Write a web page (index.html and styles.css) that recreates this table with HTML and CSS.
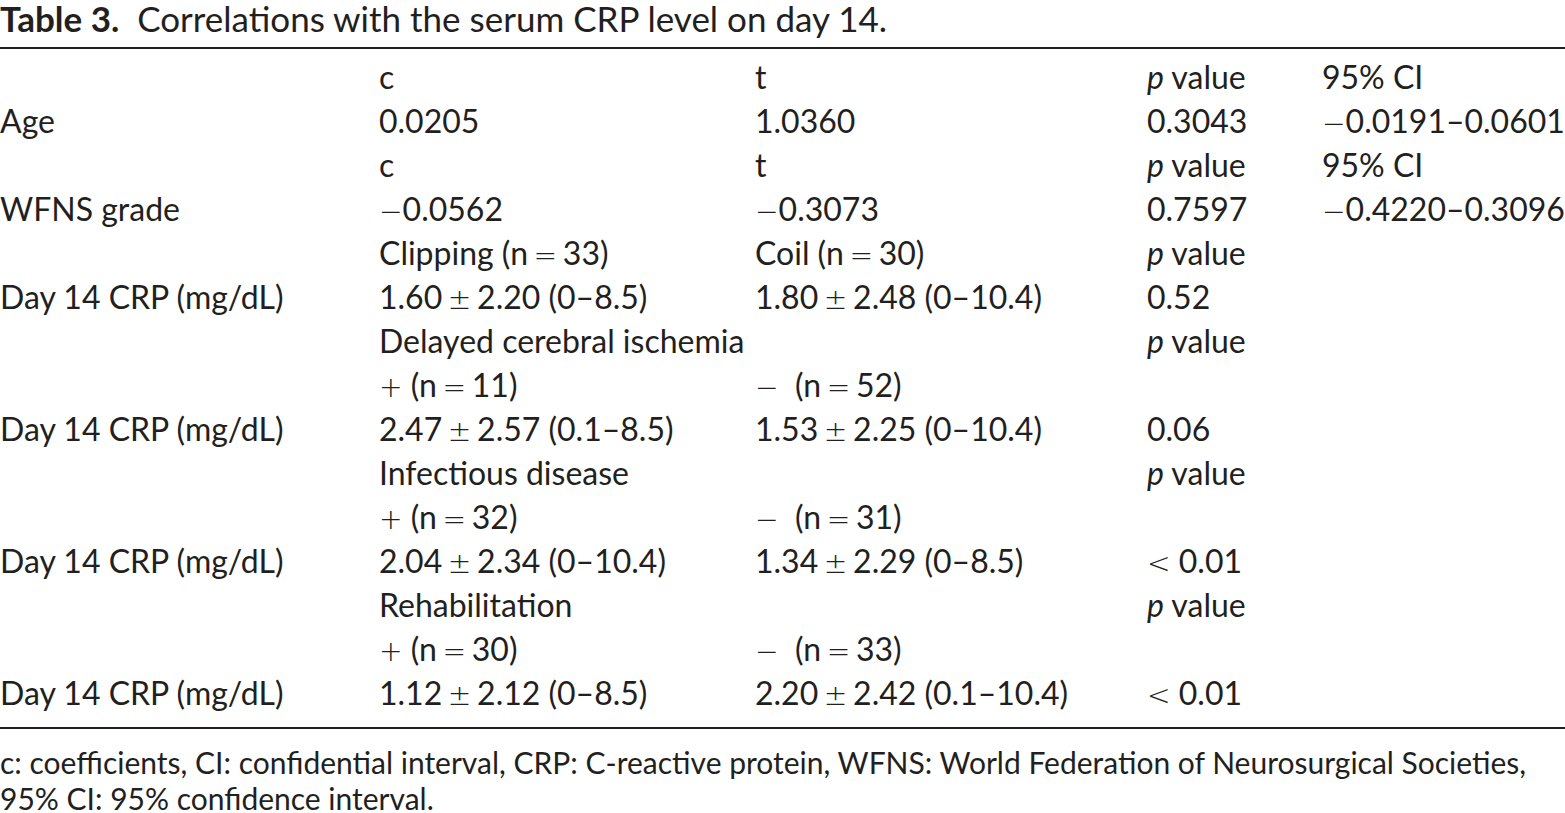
FILE: index.html
```html
<!DOCTYPE html>
<html lang="en">
<head>
<meta charset="utf-8">
<title>Table 3</title>
<link rel="stylesheet" href="styles.css">
</head>
<body>
<div class="page">
  <p class="caption"><b>Table 3.</b>&nbsp; Correlations with the serum CRP level on day 14.</p>
  <table class="data">
    <colgroup>
      <col class="c1"><col class="c2"><col class="c3"><col class="c4"><col class="c5">
    </colgroup>
    <tbody>
      <tr><td></td><td>c</td><td>t</td><td><i>p</i> value</td><td>95% CI</td></tr>
      <tr><td>Age</td><td>0.0205</td><td>1.0360</td><td>0.3043</td><td><span class="m">&minus;</span>0.0191&ndash;0.0601</td></tr>
      <tr><td></td><td>c</td><td>t</td><td><i>p</i> value</td><td>95% CI</td></tr>
      <tr><td>WFNS grade</td><td><span class="m">&minus;</span>0.0562</td><td><span class="m">&minus;</span>0.3073</td><td>0.7597</td><td><span class="m">&minus;</span>0.4220&ndash;0.3096</td></tr>
      <tr><td></td><td>Clipping (n<span class="m">&thinsp;=&thinsp;</span>33)</td><td>Coil (n<span class="m">&thinsp;=&thinsp;</span>30)</td><td><i>p</i> value</td><td></td></tr>
      <tr><td>Day 14 CRP (mg/dL)</td><td>1.60<span class="m">&thinsp;&plusmn;&thinsp;</span>2.20 (0&ndash;8.5)</td><td>1.80<span class="m">&thinsp;&plusmn;&thinsp;</span>2.48 (0&ndash;10.4)</td><td>0.52</td><td></td></tr>
      <tr><td></td><td colspan="2">Delayed cerebral ischemia</td><td><i>p</i> value</td><td></td></tr>
      <tr><td></td><td><span class="m">+</span> (n<span class="m">&thinsp;=&thinsp;</span>11)</td><td><span class="m">&minus;</span>&nbsp; (n<span class="m">&thinsp;=&thinsp;</span>52)</td><td></td><td></td></tr>
      <tr><td>Day 14 CRP (mg/dL)</td><td>2.47<span class="m">&thinsp;&plusmn;&thinsp;</span>2.57 (0.1&ndash;8.5)</td><td>1.53<span class="m">&thinsp;&plusmn;&thinsp;</span>2.25 (0&ndash;10.4)</td><td>0.06</td><td></td></tr>
      <tr><td></td><td>Infectious disease</td><td></td><td><i>p</i> value</td><td></td></tr>
      <tr><td></td><td><span class="m">+</span> (n<span class="m">&thinsp;=&thinsp;</span>32)</td><td><span class="m">&minus;</span>&nbsp; (n<span class="m">&thinsp;=&thinsp;</span>31)</td><td></td><td></td></tr>
      <tr><td>Day 14 CRP (mg/dL)</td><td>2.04<span class="m">&thinsp;&plusmn;&thinsp;</span>2.34 (0&ndash;10.4)</td><td>1.34<span class="m">&thinsp;&plusmn;&thinsp;</span>2.29 (0&ndash;8.5)</td><td><span class="m">&lt;</span> 0.01</td><td></td></tr>
      <tr><td></td><td>Rehabilitation</td><td></td><td><i>p</i> value</td><td></td></tr>
      <tr><td></td><td><span class="m">+</span> (n<span class="m">&thinsp;=&thinsp;</span>30)</td><td><span class="m">&minus;</span>&nbsp; (n<span class="m">&thinsp;=&thinsp;</span>33)</td><td></td><td></td></tr>
      <tr><td>Day 14 CRP (mg/dL)</td><td>1.12<span class="m">&thinsp;&plusmn;&thinsp;</span>2.12 (0&ndash;8.5)</td><td>2.20<span class="m">&thinsp;&plusmn;&thinsp;</span>2.42 (0.1&ndash;10.4)</td><td><span class="m">&lt;</span> 0.01</td><td></td></tr>
    </tbody>
  </table>
  <p class="note">c: coefficients, CI: confidential interval, CRP: C-reactive protein, WFNS: World Federation of Neurosurgical Societies,<br>95% CI: 95% confidence interval.</p>
</div>
</body>
</html>
```
FILE: styles.css
```css
html, body {
  margin: 0;
  padding: 0;
  background: #ffffff;
}
body {
  font-family: "Lato", "Open Sans", sans-serif;
  color: #231f20;
}
.page {
  width: 1565px;
}
.caption {
  margin: 0;
  font-size: 35px;
  line-height: 36px;
  height: 47px;
  white-space: nowrap;
}
.caption b {
  font-weight: 700;
}
.data {
  width: 1565px;
  border-collapse: collapse;
  table-layout: fixed;
  border-top: 2px solid #231f20;
  border-bottom: 2px solid #231f20;
  font-size: 32px;
}
.data tbody tr:first-child td {
  padding-top: 6px;
}
.data tbody tr:last-child td {
  padding-bottom: 12px;
}
.data td {
  padding: 0;
  height: 44px;
  line-height: 44px;
  vertical-align: middle;
  white-space: nowrap;
  overflow: visible;
}
.m {
  font-family: "DejaVu Sans", sans-serif;
  font-weight: 200;
  font-size: 0.88em;
  line-height: 1;
}
.c1 { width: 379px; }
.c2 { width: 376px; }
.c3 { width: 392px; }
.c4 { width: 175px; }
.c5 { width: 243px; }
.note {
  margin: 0;
  padding-top: 15px;
  font-size: 30px;
  line-height: 36px;
  white-space: nowrap;
}
```
